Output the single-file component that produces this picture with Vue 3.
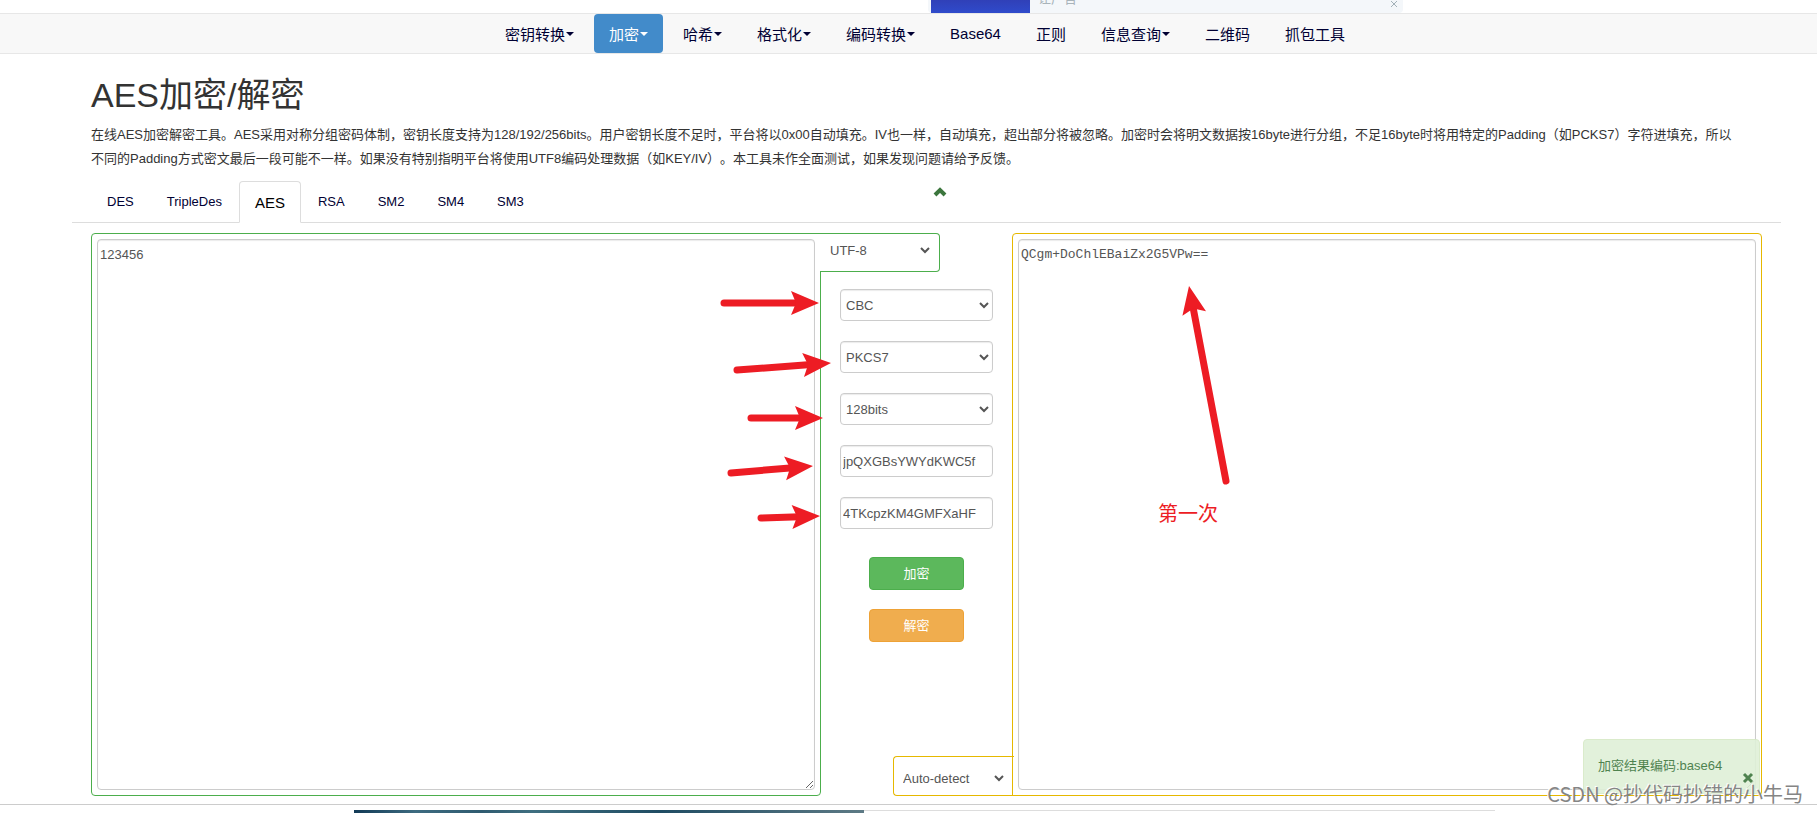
<script setup>
import { ref } from 'vue'

const menu = [
  { label: '密钥转换', caret: true },
  { label: '加密', caret: true, active: true },
  { label: '哈希', caret: true },
  { label: '格式化', caret: true },
  { label: '编码转换', caret: true },
  { label: 'Base64' },
  { label: '正则' },
  { label: '信息查询', caret: true },
  { label: '二维码' },
  { label: '抓包工具' }
]
const tabs = ['DES', 'TripleDes', 'AES', 'RSA', 'SM2', 'SM4', 'SM3']
const activeTab = ref('AES')

const plain = ref('123456')
const cipher = ref('QCgm+DoChlEBaiZx2G5VPw==')
const charset = ref('UTF-8')
const mode = ref('CBC')
const padding = ref('PKCS7')
const bits = ref('128bits')
const secret = ref('jpQXGBsYWYdKWC5f')
const iv = ref('4TKcpzKM4GMFXaHF')
const encoding = ref('Auto-detect')

const arrows = [
  { from: [724, 303], to: [819, 303] },
  { from: [737, 370], to: [831, 363] },
  { from: [751, 418], to: [823, 418] },
  { from: [731, 473], to: [813, 466] },
  { from: [761, 518], to: [820, 516] },
  { from: [1226, 481], to: [1189, 286] }
].map(({ from, to }) => {
  const dx = to[0] - from[0]
  const dy = to[1] - from[1]
  return {
    length: Math.hypot(dx, dy),
    place: `translate(${from[0]} ${from[1]}) rotate(${(Math.atan2(dy, dx) * 180) / Math.PI})`
  }
})
</script>

<template>
  <div class="page">
    <div class="promo">
      <div class="promo-card">
        <div class="promo-image"></div>
        <span class="promo-text">让广告</span>
        <button class="promo-close" type="button" aria-label="关闭">
          <svg width="8" height="8" viewBox="0 0 8 8"><path d="M1 1L7 7M7 1L1 7" /></svg>
        </button>
      </div>
    </div>

    <nav class="navbar">
      <a v-for="item in menu" :key="item.label" href="#" class="nav-link" :class="{ active: item.active }">
        {{ item.label }}<span v-if="item.caret" class="caret"></span>
      </a>
    </nav>

    <main class="content">
      <header class="intro">
        <h1>AES加密/解密</h1>
        <p>在线AES加密解密工具。AES采用对称分组密码体制，密钥长度支持为128/192/256bits。用户密钥长度不足时，平台将以0x00自动填充。IV也一样，自动填充，超出部分将被忽略。加密时会将明文数据按16byte进行分组，不足16byte时将用特定的Padding（如PCKS7）字符进填充，所以不同的Padding方式密文最后一段可能不一样。如果没有特别指明平台将使用UTF8编码处理数据（如KEY/IV）。本工具未作全面测试，如果发现问题请给予反馈。</p>
      </header>

      <div class="tabs">
        <a
          v-for="tab in tabs"
          :key="tab"
          href="#"
          class="tab"
          :class="{ active: tab === activeTab }"
          @click.prevent="activeTab = tab"
        >{{ tab }}</a>
        <button class="collapse" type="button" aria-label="收起">
          <svg width="14" height="10" viewBox="0 0 14 10"><path d="M2 8L7 3L12 8" /></svg>
        </button>
      </div>

      <div class="workspace">
        <div class="panel input-panel">
          <textarea v-model="plain" class="text-area" aria-label="明文" spellcheck="false"></textarea>
        </div>

        <div class="middle">
          <div class="charset">
            <select v-model="charset" class="plain-select" aria-label="字符集"><option>UTF-8</option></select>
          </div>
          <div class="controls">
            <select v-model="mode" class="field select-field" aria-label="模式"><option>CBC</option></select>
            <select v-model="padding" class="field select-field" aria-label="填充"><option>PKCS7</option></select>
            <select v-model="bits" class="field select-field" aria-label="密钥长度"><option>128bits</option></select>
            <input v-model="secret" class="field" type="text" aria-label="密钥" />
            <input v-model="iv" class="field" type="text" aria-label="偏移量" />
          </div>
          <div class="actions">
            <button class="btn encrypt" type="button">加密</button>
            <button class="btn decrypt" type="button">解密</button>
          </div>
          <div class="encoding">
            <select v-model="encoding" class="plain-select" aria-label="编码"><option>Auto-detect</option></select>
          </div>
        </div>

        <div class="panel output-panel">
          <textarea v-model="cipher" class="text-area mono" aria-label="密文" spellcheck="false"></textarea>
          <div class="toast" role="status">
            <span>加密结果编码:base64</span>
            <button class="toast-close" type="button" aria-label="关闭">
              <svg width="12" height="12" viewBox="0 0 12 12"><path d="M2 2L10 10M10 2L2 10" /></svg>
            </button>
          </div>
        </div>
      </div>
    </main>

    <footer class="footer">
      <div class="strip">
        <div class="strip-image"></div>
        <div class="strip-line"></div>
      </div>
    </footer>

    <svg class="notes" viewBox="0 0 1817 813" aria-hidden="true">
      <g v-for="(arrow, i) in arrows" :key="i" :transform="arrow.place">
        <line x1="0" y1="0" :x2="arrow.length - 20" y2="0" />
        <path :d="`M${arrow.length} 0L${arrow.length - 28} -12L${arrow.length - 23} 0L${arrow.length - 28} 12Z`" />
      </g>
      <text x="1158" y="521">第一次</text>
    </svg>
    <div class="watermark">CSDN @抄代码抄错的小牛马</div>
  </div>
</template>

<style>
body {
  background: #fff;
  overflow: hidden;
}
</style>

<style scoped>
.page {
  position: relative;
  font-family: "Liberation Sans", "Noto Sans CJK SC", sans-serif;
  font-size: 13px;
  color: #333;
}
.page * {
  box-sizing: border-box;
}
button,
input,
select,
textarea {
  font-family: inherit;
  font-size: 13px;
  margin: 0;
}
.promo {
  height: 13px;
  overflow: hidden;
  display: flex;
  justify-content: center;
  padding-left: 514px;
}
.promo-card {
  width: 475px;
  padding: 0 5px 0 3px;
  background: #f4f7fa;
  border-radius: 0 0 4px 4px;
  display: flex;
}
.promo-image {
  width: 99px;
  background: linear-gradient(#3040b8, #2f4bcb);
}
.promo-text {
  margin: -8px auto 0 8px;
  font-size: 13px;
  line-height: 13px;
  color: #a9b4ba;
}
.promo-close {
  width: 8px;
  height: 8px;
  padding: 0;
  border: 0;
  background: none;
  display: flex;
}
.promo-close path {
  stroke: #a3b1b8;
  stroke-width: 1;
  fill: none;
}
.navbar {
  height: 41px;
  background: #f8f8f8;
  border-top: 1px solid #e7e7e7;
  border-bottom: 1px solid #e7e7e7;
  display: flex;
  justify-content: center;
  gap: 5px;
  padding-left: 33px;
}
.nav-link {
  display: flex;
  align-items: center;
  padding: 0 15px;
  font-size: 15px;
  color: #003;
  text-decoration: none;
  border-radius: 4px;
  white-space: nowrap;
}
.nav-link.active {
  background: #428bca;
  color: #fff;
}
.caret {
  margin: 1px 0 0 1px;
  border-top: 4px solid currentColor;
  border-left: 4px solid transparent;
  border-right: 4px solid transparent;
}
.content {
  padding: 0 36px 0 72px;
}
.intro {
  padding: 20px 0 0 19px;
}
h1 {
  margin: 0;
  font-size: 34px;
  line-height: 42px;
  font-weight: 400;
}
p {
  margin: 7px 0 0;
  padding-right: 44px;
  line-height: 24px;
  text-spacing-trim: space-all;
}
.tabs {
  display: flex;
  align-items: flex-start;
  height: 42px;
  margin-top: 10px;
  padding-left: 19px;
  border-bottom: 1px solid #ddd;
}
.tab {
  height: 42px;
  margin-right: 1px;
  padding: 0 15px;
  border: 1px solid transparent;
  border-radius: 4px 4px 0 0;
  line-height: 39px;
  color: #003;
  text-decoration: none;
}
.tab.active {
  border-color: #ddd;
  border-bottom-color: #fff;
  background: #fff;
  font-size: 15px;
  line-height: 42px;
  color: #000;
}
.collapse {
  margin: 6px 834px 0 auto;
  padding: 0;
  border: 0;
  background: none;
  display: flex;
}
.collapse path {
  fill: none;
  stroke: #3c763d;
  stroke-width: 4;
}
.workspace {
  display: grid;
  grid-template-columns: 730fr 191px 750fr;
  margin: 10px 19px 0 19px;
}
.panel {
  position: relative;
  display: flex;
  padding: 5px;
  border: 1px solid #4cae4c;
  border-radius: 4px;
}
.input-panel {
  border-top-right-radius: 0;
}
.output-panel {
  border-color: #e6b800;
  border-bottom-left-radius: 0;
}
.text-area {
  width: 100%;
  height: 551px;
  padding: 6px 2px;
  border: 1px solid #ccc;
  border-radius: 4px;
  background: #fff;
  box-shadow: inset 0 1px 1px rgba(0, 0, 0, 0.08);
  color: #555;
  line-height: 18px;
  outline: 0;
}
.mono {
  font-family: "Liberation Mono", "Courier New", monospace;
}
.middle {
  display: flex;
  flex-direction: column;
}
.charset {
  position: relative;
  width: 120px;
  height: 39px;
  margin-left: -1px;
  padding: 1px 6px 0 4px;
  background: #fff;
  border: 1px solid #4cae4c;
  border-left: 0;
  border-radius: 0 4px 4px 0;
}
.encoding {
  position: relative;
  align-self: flex-end;
  width: 121px;
  height: 40px;
  margin: auto -2px 0 0;
  padding: 6px 7px 0 3px;
  background: #fff;
  border: 1px solid #e6b800;
  border-right: 0;
  border-radius: 4px 0 0 4px;
}
.plain-select {
  width: 100%;
  height: 30px;
  padding: 0 2px;
  border: 0;
  background: #fff;
  color: #555;
}
.controls {
  display: flex;
  flex-direction: column;
  gap: 20px;
  margin: 17px 19px 0;
}
.field {
  width: 100%;
  height: 32px;
  padding: 0 2px;
  border: 1px solid #ccc;
  border-radius: 4px;
  background: #fff;
  box-shadow: inset 0 1px 1px rgba(0, 0, 0, 0.08);
  color: #555;
}
.select-field {
  padding: 0 4px 0 1px;
}
.actions {
  display: flex;
  flex-direction: column;
  align-items: center;
  gap: 19px;
  margin-top: 28px;
}
.btn {
  width: 95px;
  height: 33px;
  padding: 0 0 2px;
  border: 1px solid #4cae4c;
  border-radius: 4px;
  background: #5cb85c;
  color: #fff;
}
.decrypt {
  background: #f0ad4e;
  border-color: #eea236;
}
.toast {
  position: absolute;
  right: 1px;
  bottom: 1px;
  width: 177px;
  height: 55px;
  padding: 16px 14px;
  background: #dff0d8;
  border: 1px solid #d6e9c6;
  border-radius: 4px;
  color: #3c763d;
  line-height: 20px;
  opacity: 0.9;
}
.toast-close {
  position: absolute;
  right: 5px;
  bottom: 9px;
  padding: 0;
  border: 0;
  background: none;
  display: flex;
}
.toast-close path {
  stroke: #3c763d;
  stroke-width: 3;
}
.footer {
  margin-top: 8px;
  border-top: 1px solid #ccc;
}
.strip {
  display: flex;
  height: 3px;
  margin: 5px 322px 0 354px;
}
.strip-image {
  flex: 510;
  background: linear-gradient(90deg, #123a56, #3d6b80 12%, #2f5b70 25%, #3f6f80 35%, #1f4c63 60%, #5d7a85);
}
.strip-line {
  flex: 631;
  border-top: 1px solid #ddd;
}
.notes {
  position: absolute;
  top: 0;
  left: 0;
  width: 100%;
  pointer-events: none;
}
.notes line {
  stroke: #ed1c24;
  stroke-width: 7;
  stroke-linecap: round;
}
.notes path,
.notes text {
  fill: #ed1c24;
}
.notes text {
  font-size: 20px;
}
.watermark {
  position: absolute;
  right: 14px;
  bottom: 7px;
  font-family: "Noto Sans CJK SC", sans-serif;
  font-size: 20px;
  line-height: 24px;
  color: #858585;
  text-shadow: -1px -1px 0 #fff;
  white-space: nowrap;
}
</style>
